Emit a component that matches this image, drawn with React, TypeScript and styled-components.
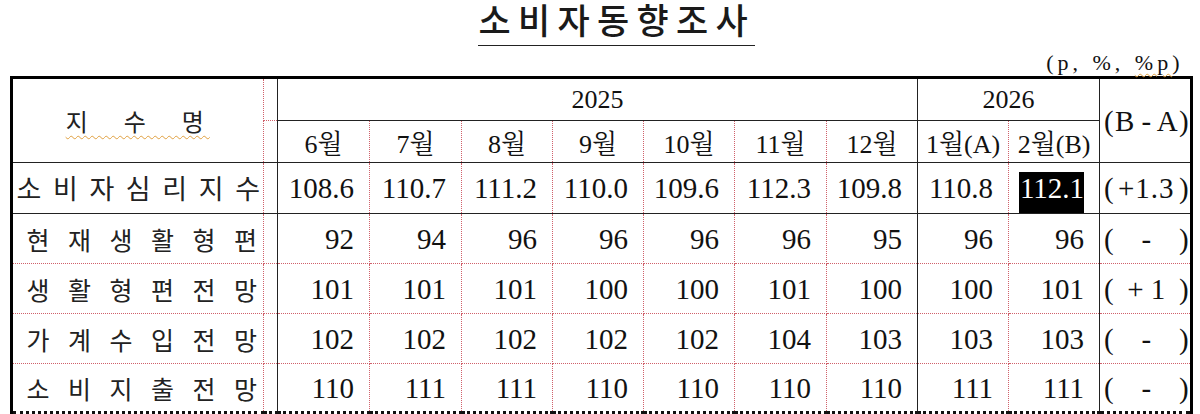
import styled, { createGlobalStyle, css } from "styled-components";

const GlobalStyle = createGlobalStyle`
  html, body {
    margin: 0;
    padding: 0;
    background: #fff;
  }
  body {
    width: 1200px;
    height: 414px;
    overflow: hidden;
    color: #111;
    font-family: "Liberation Serif", "Noto Sans CJK KR", serif;
  }
`;

const RED_DOT = "1px dotted #d0606a";
const BLACK = "1.5px solid #222";
const BOTTOM = "3px dotted #111";

type Line = "solid" | "dot" | "end" | "none";

function line(kind?: Line) {
  if (kind === "solid") return BLACK;
  if (kind === "dot") return RED_DOT;
  if (kind === "end") return BOTTOM;
  return "none";
}

const Page = styled.div`
  padding: 0 0 0 9.5px;
`;

const TitleRow = styled.div`
  display: flex;
  justify-content: center;
  height: 46px;
  padding: 0 0 0 24px;
  box-sizing: border-box;
`;

const Title = styled.h1`
  margin: 0;
  font-family: "Noto Sans CJK KR", sans-serif;
  font-weight: 500;
  font-size: 35px;
  line-height: 38px;
  letter-spacing: 7.3px;
  color: #1a1a1a;
  border-bottom: 1.5px solid #222;
`;

const UnitRow = styled.div`
  display: flex;
  justify-content: flex-end;
  align-items: flex-end;
  height: 30px;
  width: 1180px;
  padding-right: 6px;
  box-sizing: border-box;
`;

const Unit = styled.span`
  font-size: 22px;
  line-height: 26px;
  letter-spacing: 4px;
  word-spacing: 1px;

  em {
    font-style: normal;
    text-decoration: underline wavy #e0a040 1px;
    text-underline-offset: 3px;
  }
`;

const Table = styled.table`
  border-collapse: collapse;
  table-layout: fixed;
  width: 1180px;
  border-top: 3px solid #000;
  border-left: 3px solid #000;
  border-right: 3px solid #000;
`;

const Col = styled.col<{ $w: number }>`
  width: ${({ $w }) => $w}px;
`;

const Row = styled.tr<{ $h: number }>`
  height: ${({ $h }) => $h}px;
`;

const Cell = styled.td<{ $right?: Line; $bottom?: Line }>`
  padding: 0;
  text-align: center;
  vertical-align: middle;
  border-right: ${({ $right }) => line($right)};
  border-bottom: ${({ $bottom }) => line($bottom)};
`;

const HeadLabel = styled.span`
  font-family: "Noto Sans CJK KR", sans-serif;
  font-size: 24px;
  letter-spacing: 6px;
  text-decoration: underline wavy #e0a040 1px;
  text-underline-offset: 4px;
  color: #222;
`;

const YearText = styled.span`
  font-size: 26px;
`;

const MonthText = styled.span`
  font-family: "Liberation Serif", "Noto Serif CJK KR", "Noto Sans CJK KR", serif;
  font-size: 26px;
  white-space: nowrap;
`;

const LabelSpread = styled.div<{ $main?: boolean }>`
  display: flex;
  justify-content: space-between;
  font-family: "Noto Sans CJK KR", sans-serif;
  font-size: ${({ $main }) => ($main ? "27px" : "25px")};
  line-height: 34px;
  padding: ${({ $main }) => ($main ? "0 3px 0 4px" : "0 6px 0 14px")};
  color: #222;
`;

const Value = styled(Cell)<{ $low?: boolean }>`
  text-align: right;
  padding-right: 15px;
  font-size: 29px;
  line-height: 34px;
  vertical-align: ${({ $low }) => ($low ? "bottom" : "middle")};
`;

const Highlight = styled.span`
  display: inline-block;
  background: #000;
  color: #fff;
  line-height: 32px;
  padding: 0 0 9px 1px;
`;

const Diff = styled.div`
  display: flex;
  justify-content: space-between;
  align-items: center;
  padding: 0 1px 0 4px;
  font-size: 29px;
  line-height: 34px;
  white-space: pre;
`;

const DiffInner = styled.span<{ $tight?: boolean }>`
  letter-spacing: ${({ $tight }) => ($tight ? "1px" : "0")};
`;

const MONTHS = ["6월", "7월", "8월", "9월", "10월", "11월", "12월", "1월(A)", "2월(B)"];
const WIDTHS = [92, 92, 91, 91, 91, 92, 91, 91, 91];

const ROWS = [
  {
    name: "소비자심리지수",
    values: ["108.6", "110.7", "111.2", "110.0", "109.6", "112.3", "109.8", "110.8", "112.1"],
    diff: "+1.3",
    main: true,
  },
  { name: "현재생활형편", values: ["92", "94", "96", "96", "96", "96", "95", "96", "96"], diff: "-" },
  { name: "생활형편전망", values: ["101", "101", "101", "100", "100", "101", "100", "100", "101"], diff: "+ 1" },
  { name: "가계수입전망", values: ["102", "102", "102", "102", "102", "104", "103", "103", "103"], diff: "-" },
  { name: "소비지출전망", values: ["110", "111", "111", "110", "110", "110", "110", "111", "111"], diff: "-" },
];

// solid divider after 12월 and 2월(B), dotted between the other months
function monthRight(i: number): Line {
  return i === 6 || i === 8 ? "solid" : "dot";
}

function DiffCell({ inner, tight }: { inner: string; tight?: boolean }) {
  return (
    <Diff>
      <span>(</span>
      <DiffInner $tight={tight}>{inner}</DiffInner>
      <span>)</span>
    </Diff>
  );
}

export default function App() {
  return (
    <>
      <GlobalStyle />
      <Page>
        <TitleRow>
          <Title>소비자동향조사</Title>
        </TitleRow>
        <UnitRow>
          <Unit>
            (p, %, <em>%p</em>)
          </Unit>
        </UnitRow>
        <Table>
          <colgroup>
            <Col $w={252.5} />
            <Col $w={14} />
            {WIDTHS.map((w, i) => (
              <Col key={i} $w={w} />
            ))}
            <Col $w={91.5} />
          </colgroup>
          <tbody>
            <Row $h={43}>
              <Cell rowSpan={2} $right="dot" $bottom="solid">
                <HeadLabel>지　수　명</HeadLabel>
              </Cell>
              <Cell $right="solid" $bottom="dot" />
              <Cell colSpan={7} $right="solid" $bottom="solid">
                <YearText>2025</YearText>
              </Cell>
              <Cell colSpan={2} $right="solid" $bottom="solid">
                <YearText>2026</YearText>
              </Cell>
              <Cell rowSpan={2} $bottom="solid">
                <DiffCell inner="B - A" />
              </Cell>
            </Row>
            <Row $h={42}>
              <Cell $right="solid" $bottom="solid" />
              {MONTHS.map((m, i) => (
                <Cell key={m} $right={monthRight(i)} $bottom="solid">
                  <MonthText>{m}</MonthText>
                </Cell>
              ))}
            </Row>
            {ROWS.map((row, r) => {
              const last = r === ROWS.length - 1;
              const bottom: Line = r === 0 ? "solid" : last ? "end" : "dot";
              return (
                <Row key={row.name} $h={r === 0 ? 51 : last ? 49 : 50}>
                  <Cell $right="dot" $bottom={bottom}>
                    <LabelSpread $main={row.main}>
                      {row.name.split("").map((ch, i) => (
                        <span key={i}>{ch}</span>
                      ))}
                    </LabelSpread>
                  </Cell>
                  <Cell $right="solid" $bottom={bottom} />
                  {row.values.map((v, i) => {
                    const hl = row.main && i === 8;
                    return (
                      <Value key={i} $right={monthRight(i)} $bottom={bottom} $low={hl}>
                        {hl ? <Highlight>{v}</Highlight> : v}
                      </Value>
                    );
                  })}
                  <Cell $bottom={bottom}>
                    <DiffCell inner={row.diff} tight={row.main} />
                  </Cell>
                </Row>
              );
            })}
          </tbody>
        </Table>
      </Page>
    </>
  );
}
